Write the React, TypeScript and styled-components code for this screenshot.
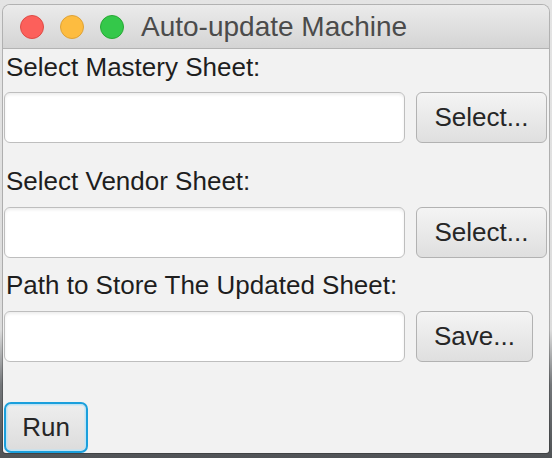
import React from "react";
import styled, { createGlobalStyle } from "styled-components";

const GlobalStyle = createGlobalStyle`
  html, body { margin: 0; padding: 0; }
  body {
    width: 552px;
    height: 458px;
    overflow: hidden;
    background: linear-gradient(to bottom, #e4e4e4 0%, #dcdcdc 72%, #74777a 84%, #505356 100%);
    font-family: "Liberation Sans", Arial, Helvetica, sans-serif;
  }
`;

const Window = styled.div`
  box-sizing: border-box;
  margin: 5px 0 0 3px;
  width: 546px;
  height: 448px;
  border-radius: 7px 7px 3px 3px;
  overflow: hidden;
  background: #f2f2f2;
  box-shadow: 0 0 0 1px rgba(0, 0, 0, 0.22);
  display: flex;
  flex-direction: column;
`;

const TitleBar = styled.div`
  box-sizing: border-box;
  height: 44px;
  flex: none;
  display: flex;
  align-items: center;
  padding-left: 17px;
  background: linear-gradient(to bottom, #ebebeb 0%, #d4d4d4 100%);
  border-bottom: 1px solid #b3b3b3;
`;

const Lights = styled.div`
  display: flex;
  gap: 16px;
`;

const Light = styled.span<{ $fill: string; $edge: string }>`
  width: 24px;
  height: 24px;
  border-radius: 50%;
  box-sizing: border-box;
  background: ${(p) => p.$fill};
  border: 1px solid ${(p) => p.$edge};
`;

const Title = styled.div`
  margin-left: 17px;
  font-size: 28px;
  color: #4b4b4b;
  line-height: 32px;
`;

const Content = styled.div`
  display: flex;
  flex-direction: column;
  padding: 3px 0 0 1px;
`;

const Label = styled.div<{ $top: number }>`
  margin-top: ${(p) => p.$top}px;
  margin-left: 2px;
  height: 30px;
  line-height: 30px;
  font-size: 26px;
  color: #1e1e1e;
`;

const Row = styled.div<{ $top: number }>`
  margin-top: ${(p) => p.$top}px;
  display: flex;
  align-items: center;
  gap: 11px;
`;

const Field = styled.input`
  box-sizing: border-box;
  width: 401px;
  height: 51px;
  margin: 0;
  border: 1.5px solid #bebebe;
  border-radius: 6px;
  background: #fff;
  box-shadow: inset 0 2px 3px rgba(0, 0, 0, 0.07);
  outline: none;
  font-family: inherit;
  font-size: 26px;
  padding: 0 10px;
`;

const Button = styled.button<{ $w: number }>`
  box-sizing: border-box;
  width: ${(p) => p.$w}px;
  height: 51px;
  margin: 0;
  padding: 0;
  border: 1.5px solid #b2b2b2;
  border-radius: 6px;
  background: linear-gradient(to bottom, #f4f4f4 0%, #dfdfdf 100%);
  font-family: inherit;
  font-size: 26px;
  color: #262626;
  cursor: default;
`;

const RunButton = styled(Button)`
  margin-top: 40px;
  border: 2px solid #1a9fdc;
  border-radius: 7px;
  box-shadow: inset 0 0 0 1.5px #bde3f5;
  background: linear-gradient(to bottom, #eeeeee 0%, #dcdcdc 100%);
`;

export default function App() {
  return (
    <>
      <GlobalStyle />
      <Window>
        <TitleBar>
          <Lights>
            <Light $fill="#fc605b" $edge="#de4b45" />
            <Light $fill="#fdbc40" $edge="#dea236" />
            <Light $fill="#34c84a" $edge="#27a834" />
          </Lights>
          <Title>Auto-update Machine</Title>
        </TitleBar>
        <Content>
          <Label $top={0}>Select Mastery Sheet:</Label>
          <Row $top={10}>
            <Field />
            <Button $w={131}>Select...</Button>
          </Row>
          <Label $top={23}>Select Vendor Sheet:</Label>
          <Row $top={11}>
            <Field />
            <Button $w={131}>Select...</Button>
          </Row>
          <Label $top={12}>Path to Store The Updated Sheet:</Label>
          <Row $top={11}>
            <Field />
            <Button $w={117}>Save...</Button>
          </Row>
          <div>
            <RunButton $w={84}>Run</RunButton>
          </div>
        </Content>
      </Window>
    </>
  );
}
